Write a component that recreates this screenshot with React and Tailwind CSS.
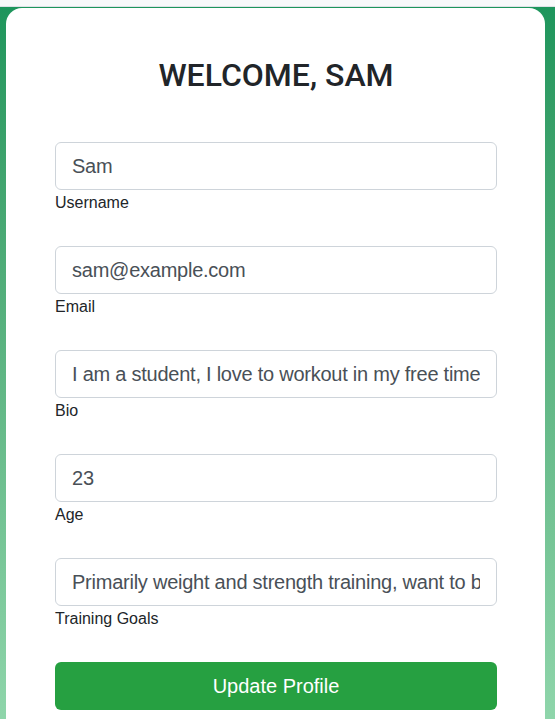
import React, { useState } from 'react';

const Field = ({ label, value, onChange, type = "text" }) => {
  return (
    <div className="mb-[31px]">
      <input
        type={type}
        value={value}
        onChange={onChange}
        className="block w-full h-12 px-4 text-[20px] tracking-[-0.012em] text-[#495057] bg-white border border-[#ced4da] rounded-[6px] outline-none"
      />
      <label className="block pt-px text-[16px] leading-6 text-[#212529]">{label}</label>
    </div>
  );
};

const App = () => {
  const [username, setUsername] = useState("Sam");
  const [email, setEmail] = useState("sam@example.com");
  const [bio, setBio] = useState("I am a student, I love to workout in my free time");
  const [age, setAge] = useState("23");
  const [goals, setGoals] = useState("Primarily weight and strength training, want to build muscle");

  return (
    <div className="min-h-screen flex flex-col font-['Liberation_Sans',Arial,sans-serif]">
      <div className="h-[7px] bg-[#f8f9fa] border-b border-[#dee2e6]" />
      <div className="flex-1 bg-linear-to-b from-[#1d955c] to-[#93d8ae] pt-px">
        <div className="ml-[6px] mr-[10px] bg-white rounded-t-[16px] pt-12 pl-[49px] pr-[48px] pb-10">
          <h2 className="text-center text-[32px] leading-[1.2] font-medium text-[#212529] font-['Roboto',sans-serif] mb-12">
            WELCOME, SAM
          </h2>

          <form onSubmit={(e) => e.preventDefault()}>
            <Field label="Username" value={username} onChange={({ target }) => setUsername(target.value)} />
            <Field label="Email" type="email" value={email} onChange={({ target }) => setEmail(target.value)} />
            <Field label="Bio" value={bio} onChange={({ target }) => setBio(target.value)} />
            <Field label="Age" value={age} onChange={({ target }) => setAge(target.value)} />
            <Field label="Training Goals" value={goals} onChange={({ target }) => setGoals(target.value)} />

            <button
              type="submit"
              className="w-full h-12 bg-[#26a041] text-white text-[20px] rounded-[6px]"
            >
              Update Profile
            </button>
          </form>
        </div>
      </div>
    </div>
  );
};

export default App;
